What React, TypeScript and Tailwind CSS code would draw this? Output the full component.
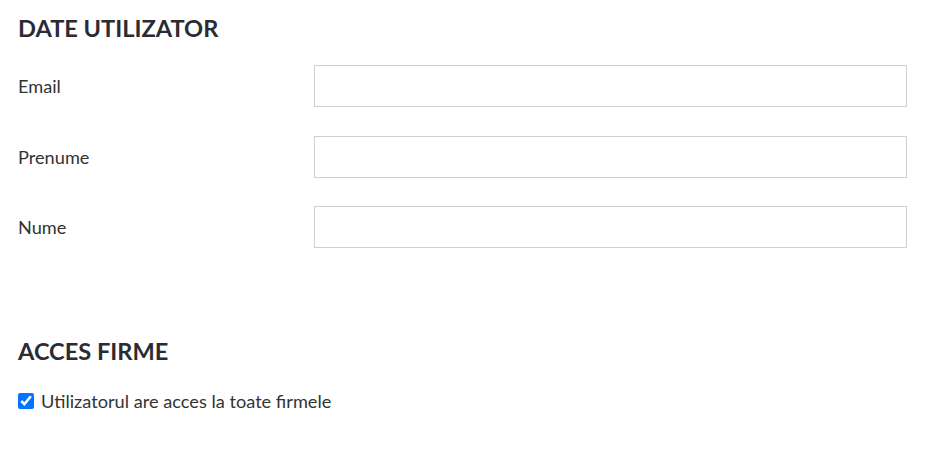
export default function App() {
  const fields = ['Email', 'Prenume', 'Nume'];

  return (
    <div className="w-[948px] h-[459px] bg-white text-[#333] font-['Lato','Liberation_Sans',sans-serif] pl-[18px] pr-[41px] pt-[12px]">
      {/* Date utilizator */}
      <h2 className="text-[23.6px] leading-[32px] font-bold text-[#2b2b33]">DATE UTILIZATOR</h2>
      <div className="mt-[21px] flex flex-col gap-[28.5px]">
        {fields.map((f) => (
          <div key={f} className="flex items-center">
            <label className="w-[296px] text-[18.2px] leading-[24px]">{f}</label>
            <input
              type="text"
              className="flex-1 h-[42px] border border-[#cfcfcf] bg-white outline-none px-3"
            />
          </div>
        ))}
      </div>

      {/* Acces firme */}
      <h2 className="mt-[87px] text-[23.6px] leading-[32px] font-bold text-[#2b2b33]">ACCES FIRME</h2>
      <label className="mt-[22px] flex items-center gap-[7px] text-[18.2px] leading-[24px]">
        <input type="checkbox" defaultChecked className="w-4 h-4 m-0 accent-[#0075ff]" />
        Utilizatorul are acces la toate firmele
      </label>
    </div>
  );
}
